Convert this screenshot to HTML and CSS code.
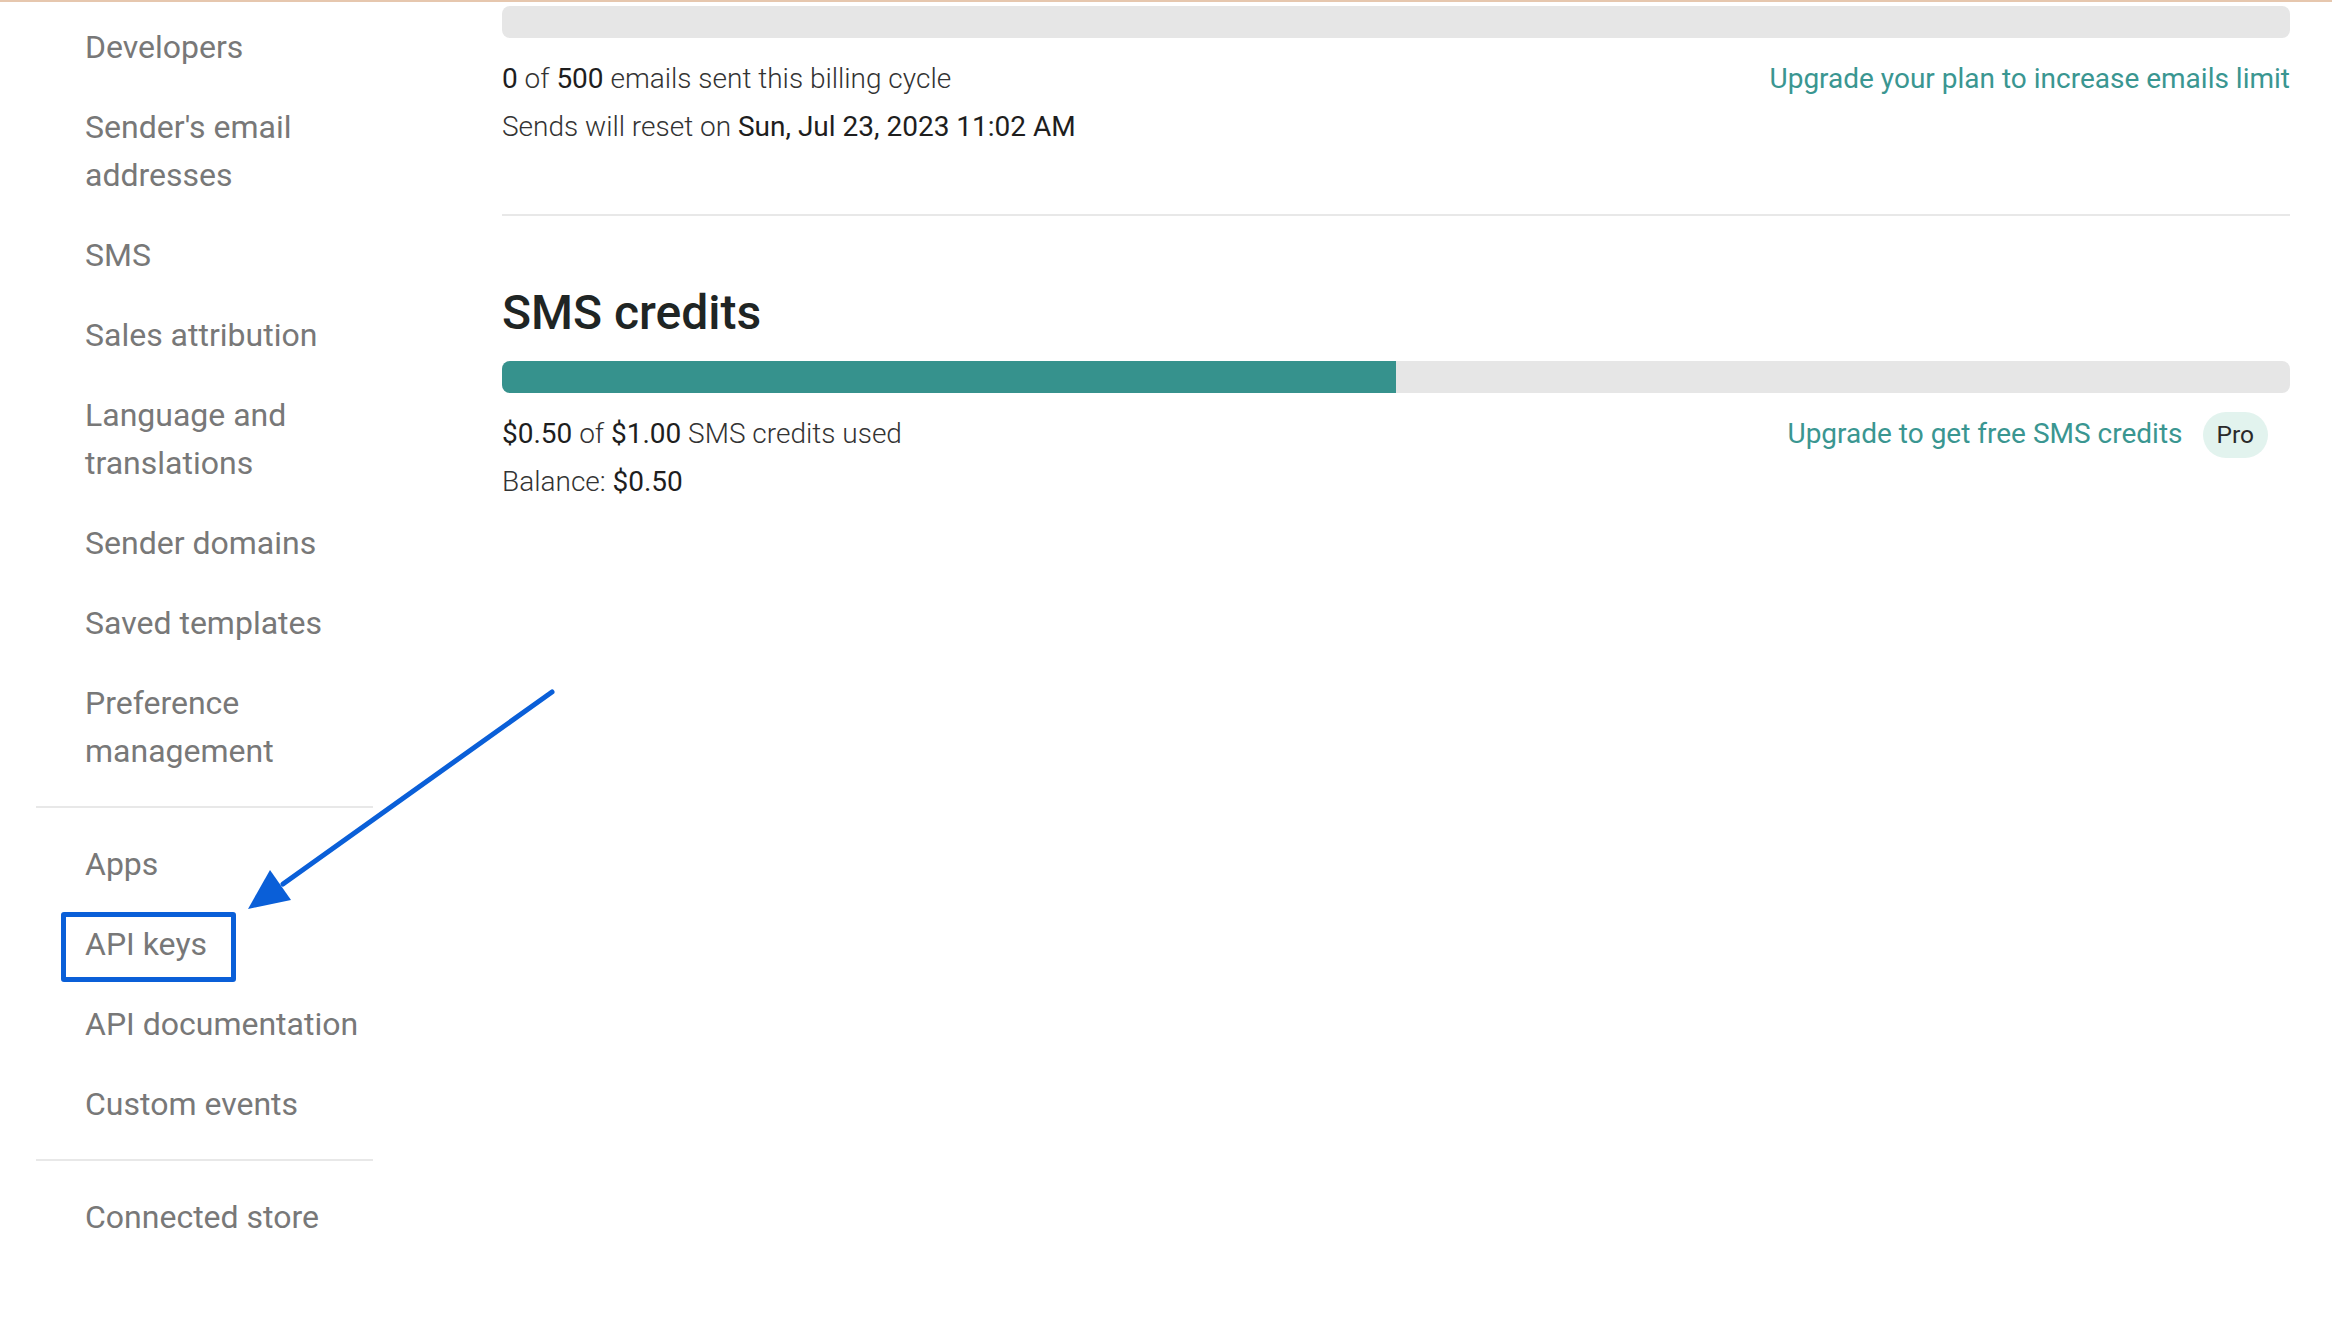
FILE: index.html
```html
<!DOCTYPE html>
<html lang="en">
<head>
<meta charset="utf-8">
<title>Account settings</title>
<link rel="stylesheet" href="styles.css">
</head>
<body>
<div class="topline"></div>
<div class="page">
  <nav class="sidebar">
    <ul class="nav-group">
      <li class="nav-item">Developers</li>
      <li class="nav-item">Sender's email addresses</li>
      <li class="nav-item">SMS</li>
      <li class="nav-item">Sales attribution</li>
      <li class="nav-item">Language and translations</li>
      <li class="nav-item">Sender domains</li>
      <li class="nav-item">Saved templates</li>
      <li class="nav-item">Preference management</li>
    </ul>
    <div class="nav-divider"></div>
    <ul class="nav-group">
      <li class="nav-item">Apps</li>
      <li class="nav-item nav-marked">API keys<span class="mark-box"></span></li>
      <li class="nav-item">API documentation</li>
      <li class="nav-item">Custom events</li>
    </ul>
    <div class="nav-divider"></div>
    <ul class="nav-group">
      <li class="nav-item">Connected store</li>
    </ul>
  </nav>

  <main class="content">
    <div class="bar bar-first"><div class="bar-fill" style="width:0%"></div></div>
    <div class="stats">
      <div class="stats-left">
        <div class="line"><span class="val">0</span> of <span class="val">500</span> emails sent this billing cycle</div>
        <div class="line">Sends will reset on <span class="val">Sun, Jul 23, 2023 11:02 AM</span></div>
      </div>
      <div class="stats-right">
        <a class="upgrade">Upgrade your plan to increase emails limit</a>
      </div>
    </div>

    <div class="divider"></div>

    <h2 class="section-title">SMS credits</h2>
    <div class="bar"><div class="bar-fill" style="width:50%"></div></div>
    <div class="stats">
      <div class="stats-left">
        <div class="line"><span class="val">$0.50</span> of <span class="val">$1.00</span> SMS credits used</div>
        <div class="line">Balance: <span class="val">$0.50</span></div>
      </div>
      <div class="stats-right">
        <a class="upgrade">Upgrade to get free SMS credits</a>
        <span class="badge">Pro</span>
      </div>
    </div>
  </main>
</div>

<svg class="arrow" width="2332" height="1324" viewBox="0 0 2332 1324" xmlns="http://www.w3.org/2000/svg">
  <line x1="552" y1="692" x2="283" y2="884" stroke="#0a5fd8" stroke-width="5" stroke-linecap="round"/>
  <polygon points="248,909 291,900 270,870" fill="#0a5fd8"/>
</svg>
</body>
</html>
```

FILE: styles.css
```css
html, body {
  margin: 0;
  padding: 0;
  background: #ffffff;
}

body {
  font-family: Roboto, "Liberation Sans", Arial, sans-serif;
  position: relative;
  width: 2332px;
  height: 1324px;
  overflow: hidden;
}

.topline {
  height: 2px;
  background: #e6c7ae;
}

.page {
  display: grid;
  grid-template-columns: 373px 1fr;
}

/* Sidebar */
.sidebar {
  padding: 5px 0 0 36px;
}

.nav-group {
  list-style: none;
  margin: 0;
  padding: 0;
}

.nav-item {
  position: relative;
  font-size: 32px;
  line-height: 48px;
  padding: 16px 0 16px 49px;
  color: #787878;
}

.nav-divider {
  height: 2px;
  background: #e8e8e8;
  margin: 15px 0 16px;
}

.mark-box {
  position: absolute;
  left: 25px;
  top: 8px;
  width: 175px;
  height: 70px;
  box-sizing: border-box;
  border: 5px solid #0a5fd8;
  border-radius: 3px;
}

/* Main content */
.content {
  padding: 4px 42px 0 129px;
}

.bar {
  height: 32px;
  border-radius: 8px;
  background: #e6e6e6;
  overflow: hidden;
}

.bar-fill {
  height: 100%;
  background: #36928d;
}

.stats {
  display: flex;
  justify-content: space-between;
  align-items: flex-start;
  margin-top: 17px;
}

.line {
  font-size: 28px;
  line-height: 48px;
  font-weight: 300;
  color: #333333;
}

.val {
  font-weight: 400;
  color: #1e1e1e;
}

.stats-right {
  display: flex;
  align-items: center;
  height: 48px;
}

.upgrade {
  font-size: 28px;
  line-height: 48px;
  color: #3a9691;
  text-decoration: none;
}

.badge {
  display: inline-flex;
  align-items: center;
  justify-content: center;
  height: 46px;
  padding: 0 14px;
  margin: 2px 22px 0 20px;
  border-radius: 23px;
  background: #e2f3ee;
  color: #2a2a2a;
  font-size: 24.5px;
}

.divider {
  height: 2px;
  background: #e8e8e8;
  margin-top: 63px;
}

.section-title {
  margin: 68px 0 0;
  font-size: 48px;
  line-height: 57.6px;
  font-weight: 500;
  color: #1f2524;
}

.section-title + .bar {
  margin-top: 19px;
}

/* Annotation arrow overlay */
.arrow {
  position: absolute;
  left: 0;
  top: 0;
  pointer-events: none;
}
```
